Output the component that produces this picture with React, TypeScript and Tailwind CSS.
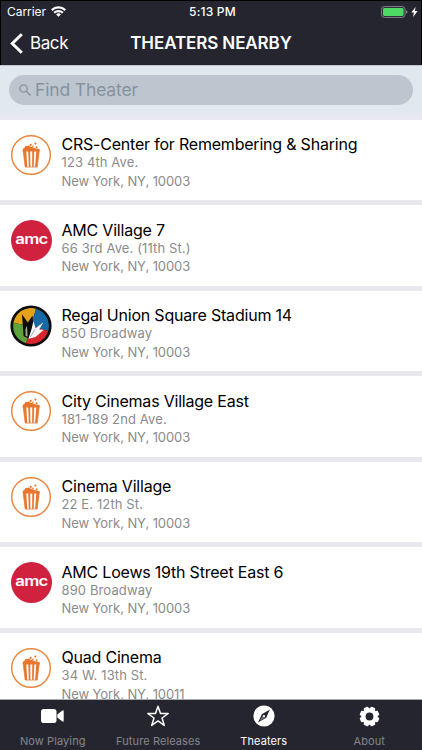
import React, { FC } from "react";

type Brand = "popcorn" | "amc" | "regal";

interface TheaterProps {
  brand: Brand;
  name: string;
  street: string;
  city: string;
}

const theaters: TheaterProps[] = [
  { brand: "popcorn", name: "CRS-Center for Remembering & Sharing", street: "123 4th Ave.", city: "New York, NY, 10003" },
  { brand: "amc", name: "AMC Village 7", street: "66 3rd Ave. (11th St.)", city: "New York, NY, 10003" },
  { brand: "regal", name: "Regal Union Square Stadium 14", street: "850 Broadway", city: "New York, NY, 10003" },
  { brand: "popcorn", name: "City Cinemas Village East", street: "181-189 2nd Ave.", city: "New York, NY, 10003" },
  { brand: "popcorn", name: "Cinema Village", street: "22 E. 12th St.", city: "New York, NY, 10003" },
  { brand: "amc", name: "AMC Loews 19th Street East 6", street: "890 Broadway", city: "New York, NY, 10003" },
  { brand: "popcorn", name: "Quad Cinema", street: "34 W. 13th St.", city: "New York, NY, 10011" },
];

const PopcornLogo = () => (
  <svg className="w-[42px] h-[42px]" viewBox="0 0 42 42" fill="none">
    <circle cx="21" cy="21" r="19.3" stroke="#e8843c" strokeWidth="1.4" />
    <path d="M13 15.5h16.4l-2.2 17.6H15.2z" fill="#fff" stroke="#e8762c" strokeWidth=".7" />
    <path
      d="M13 15.5h3.1l1.2 17.6h-2.1zM18.2 15.5h2l.2 17.6h-1.6zM22.3 15.5h2l-.6 17.6h-1.6zM26.4 15.5h3l-2.2 17.6h-2.1z"
      fill="#e8762c"
    />
    <path d="M13 17.5c-.6-2.2.5-3.8 1.6-3.8.2-1.9 1.9-2.5 2.8-1.5 1-1.4 2.9-.7 3.2.9 1.2-.7 2.5 0 2.6 1.1 1-.9 2.3-.4 2.6.5 1.4-.6 4 .2 3.6 2.8z" fill="#e8762c" />
    <circle cx="20.7" cy="10.8" r="1.1" fill="#e8762c" />
    <circle cx="25.4" cy="9.6" r="1.1" fill="#e8762c" />
    <circle cx="26.6" cy="13.2" r="1" fill="#e8762c" />
    <circle cx="23" cy="12.4" r=".8" fill="#e8762c" />
  </svg>
);

const AmcLogo = () => (
  <div className="flex h-[42px] w-[42px] items-center justify-center">
    <div className="flex h-[41px] w-[41px] items-center justify-center rounded-full bg-[#d0213f]">
      <span className="-mt-[3px] scale-x-[1.2] text-[14px] font-semibold leading-none tracking-[-0.7px] text-white">amc</span>
    </div>
  </div>
);

const RegalLogo = () => (
  <svg className="w-[42px] h-[42px]" viewBox="-21 -21 42 42">
    <circle r="20.6" fill="#0c0c0d" />
    <path d="M0 0-17.6-3A18 18 0 0 1 5-17.3z" fill="#e3a21a" />
    <path d="M0 0 5-17.3A18 18 0 0 1 17.2 5z" fill="#1769a5" />
    <path d="M0 0 17.2 5A18 18 0 0 1-5 17.3z" fill="#d8262e" />
    <path d="M0 0-5 17.3A18 18 0 0 1-17.6-3z" fill="#5ea43c" />
    <path d="M-9-11.8-3.2-3.6 1.6-10.6 2.4 2-2.2 12.6-7.4 10.2z" fill="#0c0c0d" />
    <path d="M-5.6 3.5-4-.5-3.4 10.5-5.4 10z" fill="#a3a89c" />
    <path d="M2.4-4.8 4.6 2.2 12.4-3.8 8.2 3.4l4.6.4L4.6 11l-7.2 1.8L.6 3z" fill="#f7f7f7" />
    <path d="M4 3.4-.8 11" stroke="#777" strokeWidth=".6" />
  </svg>
);

const Logo: FC<{ brand: Brand }> = ({ brand }) => {
  if (brand === "amc") return <AmcLogo />;
  if (brand === "regal") return <RegalLogo />;
  return <PopcornLogo />;
};

const Theater: FC<TheaterProps> = ({ brand, name, street, city }) => (
  <div className="flex h-[80.5px] shrink-0 items-start bg-white pl-[10px] pt-[14px]">
    <Logo brand={brand} />
    <div className="ml-[9.5px] whitespace-nowrap pt-[0.5px]">
      <h4 className="text-[16px] leading-[21px] tracking-[-0.21px] text-black">{name}</h4>
      <p className="text-[13px] leading-[18px] mt-[-2px] tracking-[0.12px] text-[#8b8b8b]">{street}</p>
      <p className="mt-[0.8px] text-[13px] leading-[18px] tracking-[-0.08px] text-[#8b8b8b]">{city}</p>
    </div>
  </div>
);

const StatusBar = () => (
  <div className="grid h-[21px] grid-cols-3 items-center pl-[6px] pr-[3px] text-[12px] text-white">
    <div className="flex items-center gap-[5px]">
      <span className="tracking-[-0.05px]">Carrier</span>
      <svg className="h-[11px] w-[15px]" viewBox="0 0 15 11" fill="none" stroke="#fff" strokeWidth="2.2">
        <path d="M.8 4.1a9.5 9.5 0 0 1 13.4 0M3.2 6.8a6.1 6.1 0 0 1 8.6 0" />
        <path d="M7.5 10.8 5.1 8.4a3.4 3.4 0 0 1 4.8 0z" fill="#fff" stroke="none" />
      </svg>
    </div>
    <span className="text-center font-medium tracking-[0.2px]">5:13 PM</span>
    <div className="flex items-center justify-end gap-[3px]">
      <svg className="h-[12px] w-[27px]" viewBox="0 0 27 12">
        <rect x=".6" y=".6" width="23.4" height="10.8" rx="2.6" fill="none" stroke="#85858b" />
        <rect x="2" y="2" width="20.6" height="8" rx="1.4" fill="#4cd964" />
        <path d="M25 4.2q1.5.5 1.5 1.8T25 7.8z" fill="#85858b" />
      </svg>
      <svg className="h-[10px] w-[7px]" viewBox="0 0 7 10">
        <path d="M4.6 0 .3 5.6h2.6L2.1 10l4.5-5.9H3.9z" fill="#fff" />
      </svg>
    </div>
  </div>
);

interface TabProps {
  label: string;
  active?: boolean;
  children: React.ReactNode;
}

const Tab: FC<TabProps> = ({ label, active, children }) => (
  <div className="flex flex-1 flex-col items-center pt-[4px]">
    <div className="flex h-[24px] items-center justify-center">{children}</div>
    <span className={`mt-[6px] whitespace-nowrap text-[11px] leading-[15px] tracking-[0.1px] ${active ? "text-white" : "text-[#85858a]"}`}>{label}</span>
  </div>
);

const TabBar = () => (
  <div className="flex h-[51px] shrink-0 border-t border-[#a9a9ae] bg-[#252530]">
    <Tab label="Now Playing">
      <svg className="h-[14px] w-[23px]" viewBox="0 0 23 14" fill="#fff">
        <rect width="15.5" height="14" rx="2.8" />
        <path d="M16.3 5.5 21 1.8q1.7-1.2 1.7.5v9.4q0 1.7-1.7.5l-4.7-3.7z" />
      </svg>
    </Tab>
    <Tab label="Future Releases">
      <svg className="h-[22px] w-[24px]" viewBox="0 0 24 22" fill="none" stroke="#fff" strokeWidth="1.5" strokeLinejoin="round">
        <path d="m12 1.3 2.5 7.2h7.7L16 13l2.3 7.4L12 15.9l-6.3 4.5L8 13 1.8 8.5h7.7z" />
      </svg>
    </Tab>
    <Tab label="Theaters" active>
      <svg className="h-[22px] w-[22px]" viewBox="0 0 22 22">
        <circle cx="11" cy="11" r="10.6" fill="#fff" />
        <path d="m16.9 4.5-3.7 8.2-8.1 4.8 3.7-8.2z" fill="#252530" />
        <path d="m6.5 16.1 3.6-6 2.5 2.2z" fill="#fff" opacity=".35" />
        <circle cx="11" cy="11" r="1.1" fill="#fff" />
      </svg>
    </Tab>
    <Tab label="About">
      <svg className="h-[21px] w-[21px]" viewBox="-11 -11 22 22">
        <g fill="#fff">
          <circle r="8.6" />
          <rect x="-2.7" y="-10.3" width="5.4" height="20.6" rx="1.2" transform="rotate(22.5)" />
          <rect x="-2.7" y="-10.3" width="5.4" height="20.6" rx="1.2" transform="rotate(67.5)" />
          <rect x="-2.7" y="-10.3" width="5.4" height="20.6" rx="1.2" transform="rotate(112.5)" />
          <rect x="-2.7" y="-10.3" width="5.4" height="20.6" rx="1.2" transform="rotate(157.5)" />
        </g>
        <circle r="4.1" fill="#252530" />
      </svg>
    </Tab>
  </div>
);

export default function App() {
  return (
    <div className="flex h-[750px] w-[422px] flex-col overflow-hidden bg-[#e8e8ee] font-['Inter','Liberation_Sans',sans-serif]">
      <header className="h-[65px] shrink-0 border-x border-t border-black bg-[#252530]">
        <StatusBar />
        <div className="grid h-[43px] grid-cols-[1fr_auto_1fr] items-center text-white">
          <div className="flex items-center gap-[7px] pl-[9px]">
            <svg className="h-[21px] w-[13px]" viewBox="0 0 13 21" fill="none" stroke="#fff" strokeWidth="3">
              <path d="M11.8 1.2 2.3 10.5l9.5 9.3" />
            </svg>
            <span className="text-[17px] tracking-[-0.4px]">Back</span>
          </div>
          <h1 className="text-[17px] font-semibold tracking-[-0.1px]">THEATERS NEARBY</h1>
        </div>
      </header>

      <div className="h-[48px] shrink-0 border-t border-[#c4c6ce] bg-[#e1e8ee] px-[9px] pt-[9px]">
        <div className="flex h-[30px] items-center rounded-full bg-[#bdc6cf] pl-[10px] text-[#86939e]">
          <svg className="h-[12px] w-[12px]" viewBox="0 0 12 12" fill="none" stroke="#86939e" strokeWidth="1.3">
            <circle cx="4.5" cy="4.5" r="3.7" />
            <path d="m7.3 7.3 4.2 4.2" />
          </svg>
          <span className="ml-[4px] text-[17.5px] tracking-[-0.15px]">Find Theater</span>
        </div>
      </div>

      <div className="flex min-h-0 flex-1 flex-col gap-[5px] overflow-hidden pt-[6.5px]">
        {theaters.map((theater) => (
          <Theater key={theater.name} {...theater} />
        ))}
      </div>

      <TabBar />
    </div>
  );
}
